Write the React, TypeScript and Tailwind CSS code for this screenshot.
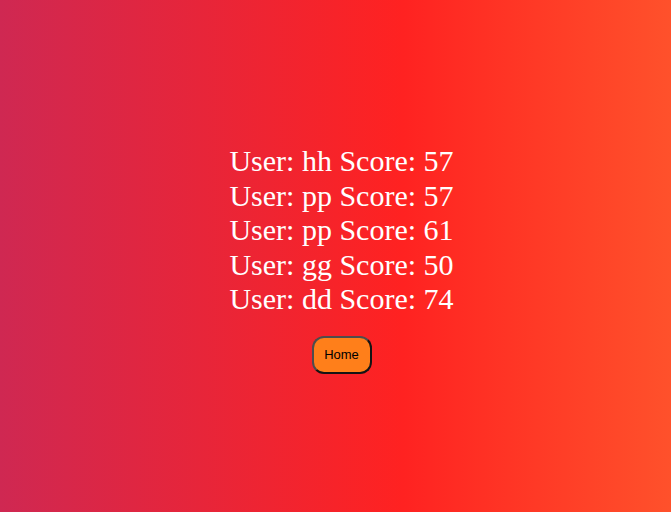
import React from 'react';

const scores = [
  { user: 'hh', score: 57 },
  { user: 'pp', score: 57 },
  { user: 'pp', score: 61 },
  { user: 'gg', score: 50 },
  { user: 'dd', score: 74 },
];

const App: React.FC = () => {
  return (
    <div className="flex h-[512px] w-full flex-col items-center justify-center pl-3 bg-[linear-gradient(90deg,#cf2852_0%,#ff2221_60%,#ff512b_100%)]">
      <div className="mt-[6px] flex flex-col items-center font-['Liberation_Serif',serif] text-[30px] leading-[1.15] text-white">
        {scores.map((s, i) => (
          <div key={i}>
            User: {s.user} Score: {s.score}
          </div>
        ))}
      </div>
      <button className="mt-[19px] h-[38px] w-[60px] rounded-[12px] border-2 border-t-[#4d4d4d] border-l-[#4d4d4d] border-b-[#141414] border-r-[#141414] bg-[#ff7f1a] font-['Liberation_Sans',sans-serif] text-[13px] text-black">
        Home
      </button>
    </div>
  );
};

export default App;
